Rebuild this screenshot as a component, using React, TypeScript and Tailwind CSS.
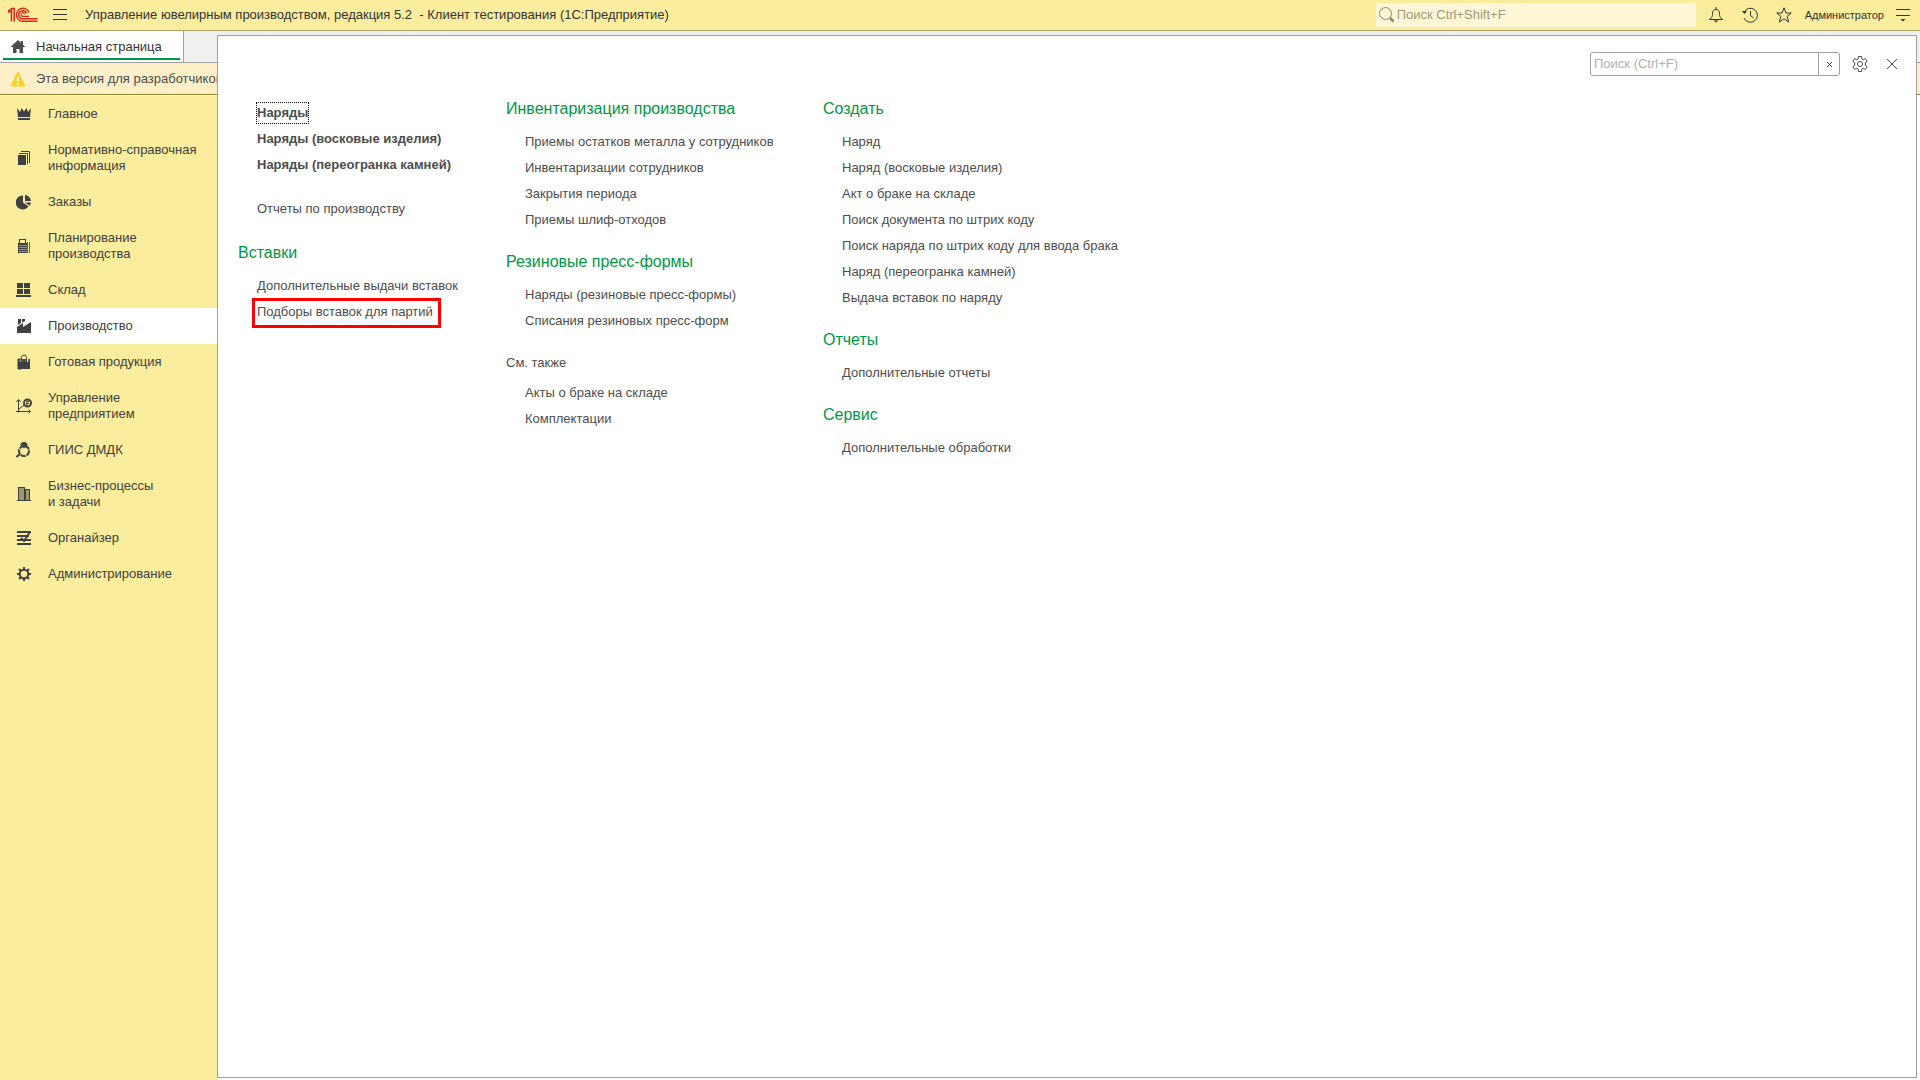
import type { ReactNode } from "react";

type Item = { text: string; bold?: boolean; focused?: boolean; marked?: boolean };
type Group = { title?: string; muted?: boolean; items: Item[] };

const Icon = ({ children, size = 16 }: { children: ReactNode; size?: number }) => (
  <svg width={size} height={size} viewBox="0 0 16 16" fill="currentColor" aria-hidden="true" className="shrink-0">
    {children}
  </svg>
);

const SECTIONS: { text: string; active?: boolean; icon: ReactNode }[] = [
  {
    text: "Главное",
    icon: <path d="M1 2l3 4 1.500-4L8 5.500l2.500-3.500L12 6l3-4-1 9H2zM2 12h12v2H2z" />,
  },
  {
    text: "Нормативно-справочная\nинформация",
    icon: (
      <>
        <path d="M2 5h8v10H2z" />
        <path d="M3 3.500h8.500V14M5 1.500h8.500V13" fill="none" stroke="currentColor" />
      </>
    ),
  },
  {
    text: "Заказы",
    icon: <path d="M7 1.500V8.500l5.500 4A7 7 0 1 1 7 1.500zM9 1a6.500 6.500 0 0 1 6 6H9zM9 8.500h6a7 7 0 0 1-1.500 3.300z" />,
  },
  {
    text: "Планирование\nпроизводства",
    icon: (
      <>
        <path d="M3 1h7v4h1v10H2V5h1zM4 2v3h5V2z" fillRule="evenodd" />
        <path d="M13.500 4v11M11.500 4v11" stroke="currentColor" strokeWidth=".8" />
        <path d="M3.500 7.500h7M3.500 9.500h7M3.500 11.500h7M3.500 13.500h7" stroke="#fbed9e" strokeDasharray="1 1" />
      </>
    ),
  },
  {
    text: "Склад",
    icon: <path d="M1 1h6v5H1zM8 1h6v5H8zM1 7h6v5H1zM8 7h6v5H8zM0 13h15v2H0z" />,
  },
  {
    text: "Производство",
    active: true,
    icon: <path d="M2 1h3v4L2 7zM6 1h3v2L6 4.500zM1 9l6-4v4l8-5v11H1z" />,
  },
  {
    text: "Готовая продукция",
    icon: (
      <>
        <path d="M2 5h12v10H2z" />
        <path d="M5 8V3.500a3 3 0 0 1 6 0V8" fill="none" stroke="#fbed9e" strokeWidth="2.500" />
        <path d="M2 5h3v10H2zM5.500 8V3.500a2.500 2.500 0 0 1 5 0V8" fill="none" stroke="currentColor" />
      </>
    ),
  },
  {
    text: "Управление\nпредприятием",
    icon: (
      <>
        <path d="M2.500 2v12.500M0 13.500h14M3 11l5-4M.500 4l2-2.500 2 2.500M12.500 11.500l2 2-2 2" fill="none" stroke="currentColor" />
        <circle cx="11.500" cy="5" r="3.500" fill="none" stroke="currentColor" strokeWidth="2" />
        <path d="M10 5.500h3M11 3v5M11 3.500h2" stroke="currentColor" />
      </>
    ),
  },
  {
    text: "ГИИС ДМДК",
    icon: (
      <>
        <circle cx="8" cy="9" r="5" fill="none" stroke="currentColor" strokeWidth="2" strokeDasharray="5 1" />
        <path d="M6.500 0h3L12 2.500 8 6.500 4 2.500z" />
        <path d="M4 12l-3.500 3" stroke="currentColor" strokeWidth="2" />
      </>
    ),
  },
  {
    text: "Бизнес-процессы\nи задачи",
    icon: (
      <path d="M2 1h7v2h5v11h1v1H1v-1h1zM3 2.500v1h5v-1zM3 4.500v1h5v-1zM3 6.500v1h5v-1zM3 8.500v1h5v-1zM3 10.500v1h5v-1zM3 12.500v1h5v-1zM10 4.500v1h3v-1zM10 6.500v1h3v-1zM10 8.500v1h3v-1zM10 10.500v1h3v-1zM10 12.500v1h3v-1z" fillRule="evenodd" />
    ),
  },
  {
    text: "Органайзер",
    icon: (
      <>
        <path d="M1 1h14v2H1zM1 5h12v2H1zM1 9h14v2H1zM1 13h14v2H1z" />
        <path d="M14 2l-6 9-3-3" fill="none" stroke="currentColor" strokeWidth="2" />
      </>
    ),
  },
  {
    text: "Администрирование",
    icon: (
      <>
        <circle cx="8" cy="8" r="4.300" fill="none" stroke="currentColor" strokeWidth="2" />
        <path d="M8 1v2.500M8 12.500V15M1 8h2.500M12.500 8H15M3 3l2 2M11 11l2 2M13 3l-2 2M5 11l-2 2" stroke="currentColor" strokeWidth="2" />
      </>
    ),
  },
];

const COLUMNS: Group[][] = [
  [
    {
      items: [
        { text: "Наряды", bold: true, focused: true },
        { text: "Наряды (восковые изделия)", bold: true },
        { text: "Наряды (переогранка камней)", bold: true },
      ],
    },
    { items: [{ text: "Отчеты по производству" }] },
    {
      title: "Вставки",
      items: [{ text: "Дополнительные выдачи вставок" }, { text: "Подборы вставок для партий", marked: true }],
    },
  ],
  [
    {
      title: "Инвентаризация производства",
      items: [
        { text: "Приемы остатков металла у сотрудников" },
        { text: "Инвентаризации сотрудников" },
        { text: "Закрытия периода" },
        { text: "Приемы шлиф-отходов" },
      ],
    },
    {
      title: "Резиновые пресс-формы",
      items: [{ text: "Наряды (резиновые пресс-формы)" }, { text: "Списания резиновых пресс-форм" }],
    },
    { title: "См. также", muted: true, items: [{ text: "Акты о браке на складе" }, { text: "Комплектации" }] },
  ],
  [
    {
      title: "Создать",
      items: [
        { text: "Наряд" },
        { text: "Наряд (восковые изделия)" },
        { text: "Акт о браке на складе" },
        { text: "Поиск документа по штрих коду" },
        { text: "Поиск наряда по штрих коду для ввода брака" },
        { text: "Наряд (переогранка камней)" },
        { text: "Выдача вставок по наряду" },
      ],
    },
    { title: "Отчеты", items: [{ text: "Дополнительные отчеты" }] },
    { title: "Сервис", items: [{ text: "Дополнительные обработки" }] },
  ],
];

function Logo() {
  return (
    <svg width="30" height="16" viewBox="0 0 30 16" fill="none" stroke="#d9261c" strokeWidth="1.500" role="img" aria-label="1С">
      <path d="M0 4.500L3.500 1.700V14.500M3 1.500h3.200V14.500M0 4.700h3.500" />
      <path d="M21 5.500A6.500 6.500 0 1 0 15 14.300H29.500" />
      <path d="M18.500 6.500A4 4 0 1 0 15 11.800H29.500" />
      <path d="M16.500 7a1.800 1.800 0 1 0-1.500 2.300H21" strokeWidth="1.200" />
    </svg>
  );
}

function TopBar() {
  return (
    <header className="flex h-[31px] items-center border-b border-[#a9a067] bg-[#fbed9e] pr-2.5 pl-2">
      <Logo />
      <button aria-label="Меню" className="ml-[13px] p-0.5">
        <svg width="14" height="12" viewBox="0 0 14 12" stroke="#333" aria-hidden="true">
          <path d="M0 .500h14M0 5.500h14M0 10.500h14" />
        </svg>
      </button>
      <h1 className="ml-4 whitespace-pre">Управление ювелирным производством, редакция 5.2  - Клиент тестирования (1С:Предприятие)</h1>
      <label className="ml-auto flex h-6 w-80 items-center gap-0.5 rounded-xs bg-[#fdf7d7] pl-[3px] text-[#8f8a6c]">
        <Icon>
          <circle cx="6.500" cy="6.500" r="6" fill="none" stroke="currentColor" />
          <path d="M11 11l3.500 3.500" stroke="currentColor" strokeWidth="2.500" />
        </Icon>
        <input aria-label="Глобальный поиск" placeholder="Поиск Ctrl+Shift+F" className="min-w-0 flex-1 bg-transparent outline-none placeholder:text-[#a09b7c]" />
      </label>
      <nav className="ml-3 flex items-center gap-[18px] text-[#333]">
        <button aria-label="Уведомления">
          <Icon>
            <path d="M1.500 12.500h13c-3-2-3-4-3-6.500 0-2-1.500-3.500-3.500-3.500S4.500 4 4.500 6c0 2.500 0 4.500-3 6.500zM8 0v2.500" fill="none" stroke="currentColor" />
            <path d="M5.500 13.500h5L8 15.500z" />
          </Icon>
        </button>
        <button aria-label="История">
          <Icon>
            <path d="M2 5.500a7 7 0 1 1 0 5.500M8.500 4v4.500l3 2.500" fill="none" stroke="currentColor" />
            <path d="M0 4h5L2.500 7z" />
          </Icon>
        </button>
        <button aria-label="Избранное">
          <Icon>
            <path d="M8 .800l2 5.200h5.300l-4.200 3.500 1.600 5.500L8 11.800 3.300 15l1.600-5.500L.700 6H6z" fill="none" stroke="currentColor" />
          </Icon>
        </button>
      </nav>
      <button className="ml-[13px] text-[11px]">Администратор</button>
      <button aria-label="Настройки окна" className="ml-3">
        <svg width="14" height="13" viewBox="0 0 14 13" aria-hidden="true">
          <path d="M0 .500h14M0 6.500h14" stroke="#333" />
          <path d="M4.500 10h5L7 12.500z" fill="#333" />
        </svg>
      </button>
    </header>
  );
}

function Sidebar() {
  return (
    <nav className="w-[217px] flex-1 bg-[#fbed9e]">
      {SECTIONS.map(({ text, active, icon }) => (
        <a
          key={text}
          href="#"
          className={`flex items-center gap-4 py-2.5 pl-4 whitespace-pre text-[#404040] ${active ? "bg-white" : ""}`}
        >
          <Icon>{icon}</Icon>
          {text}
        </a>
      ))}
    </nav>
  );
}

function Link({ text, bold, focused, marked }: Item) {
  return (
    <li className="flex h-[26px] items-center">
      <a href="#" className={`relative whitespace-nowrap ${bold ? "font-bold" : ""}`}>
        {text}
        {focused && <span className="absolute -inset-x-px -inset-y-[3px] border border-dotted border-black" />}
        {marked && <span className="absolute -top-1.5 -right-2 -bottom-2 -left-[5px] border-3 border-[#ff0000]" />}
      </a>
    </li>
  );
}

function Section({ title, muted, items }: Group) {
  return (
    <section>
      {title && (
        <h2 className={`h-[26px] leading-[26px] whitespace-nowrap ${muted ? "mb-1" : "mb-[7px] text-[16px] text-[#009646]"}`}>
          {title}
        </h2>
      )}
      <ul className={title ? "pl-[19px]" : "pb-0.5 pl-[19px]"}>
        {items.map((item) => (
          <Link key={item.text} {...item} />
        ))}
      </ul>
    </section>
  );
}

function FunctionsPanel() {
  return (
    <main className="absolute top-[35px] right-[3px] bottom-[2px] left-[217px] border border-[#a0a0a0] bg-white text-[#4d4d4d]">
      <div className="flex items-center justify-end pt-4 pr-[19px]">
        <div className="flex h-6 w-[250px] rounded-[3px] border border-[#a0a0a0]">
          <input aria-label="Поиск по командам" placeholder="Поиск (Ctrl+F)" className="min-w-0 flex-1 px-[3px] outline-none placeholder:text-[#b0b0b0]" />
          <button aria-label="Очистить" className="flex w-[21px] items-center justify-center border-l border-[#a0a0a0]">
            <svg width="5" height="5" viewBox="0 0 5 5" stroke="#444" aria-hidden="true">
              <path d="M0 0l5 5M5 0L0 5" />
            </svg>
          </button>
        </div>
        <button aria-label="Настройка" className="ml-3">
          <Icon>
            <path
              d="M6.300.500h3.400v2.300l1.600.900 2-1.200L15.200 5.300l-1.900 1.300v2.800l1.900 1.300-1.900 2.800-2-1.200-1.600.900v2.300H6.300v-2.300l-1.600-.900-2 1.200L.800 10.700l1.900-1.300V6.600L.800 5.300l1.900-2.800 2 1.200 1.600-.900z"
              fill="none"
              stroke="currentColor"
            />
            <circle cx="8" cy="8" r="2.500" fill="none" stroke="currentColor" />
          </Icon>
        </button>
        <button aria-label="Закрыть" className="ml-[19px]">
          <svg width="10" height="10" viewBox="0 0 10 10" stroke="#444" aria-hidden="true">
            <path d="M0 0l10 10M10 0L0 10" />
          </svg>
        </button>
      </div>
      <div className="grid grid-cols-[268px_317px_auto] pt-5 pl-5">
        {COLUMNS.map((groups, i) => (
          <div key={i} className={`flex flex-col gap-4 ${i === 0 ? "pt-1" : ""}`}>
            {groups.map((group, n) => (
              <Section key={n} {...group} />
            ))}
          </div>
        ))}
      </div>
    </main>
  );
}

export default function App() {
  return (
    <div className="relative flex min-h-screen flex-col bg-white font-['Liberation_Sans',Arial,sans-serif] text-[13px] leading-4 text-[#333]">
      <TopBar />
      <div className="flex h-8 border-b border-[#a0a0a0] bg-[#f0f0f0]">
        <a href="#" className="flex w-[184px] border-r border-[#a0a0a0] bg-white px-[3px] pb-0.5">
          <span className="flex flex-1 items-center gap-2.5 border-b-2 border-[#009646] pt-1 pl-[7px]">
            <Icon>
              <path d="M8 1l7.500 7H13v6H9.500v-4h-3v4H3V8H.500zM11 2h2v4h-2z" fill="#4d4d4d" />
            </Icon>
            Начальная страница
          </span>
        </a>
      </div>
      <div className="flex h-8 items-center gap-2.5 border-b border-[#9c7f1e] bg-[#fdf0c8] pl-2.5 text-[#4d4d4d]">
        <svg width="16" height="16" viewBox="0 0 16 16" aria-hidden="true" className="shrink-0">
          <path d="M8 1l7 14H1z" fill="#fccf2a" stroke="#fccf2a" strokeLinejoin="round" />
          <path d="M8 6v4.500M8 12v2" stroke="#fff" strokeWidth="2" />
        </svg>
        Эта версия для разработчиков
      </div>
      <div className="flex flex-1 flex-col pt-px">
        <Sidebar />
      </div>
      <FunctionsPanel />
    </div>
  );
}
